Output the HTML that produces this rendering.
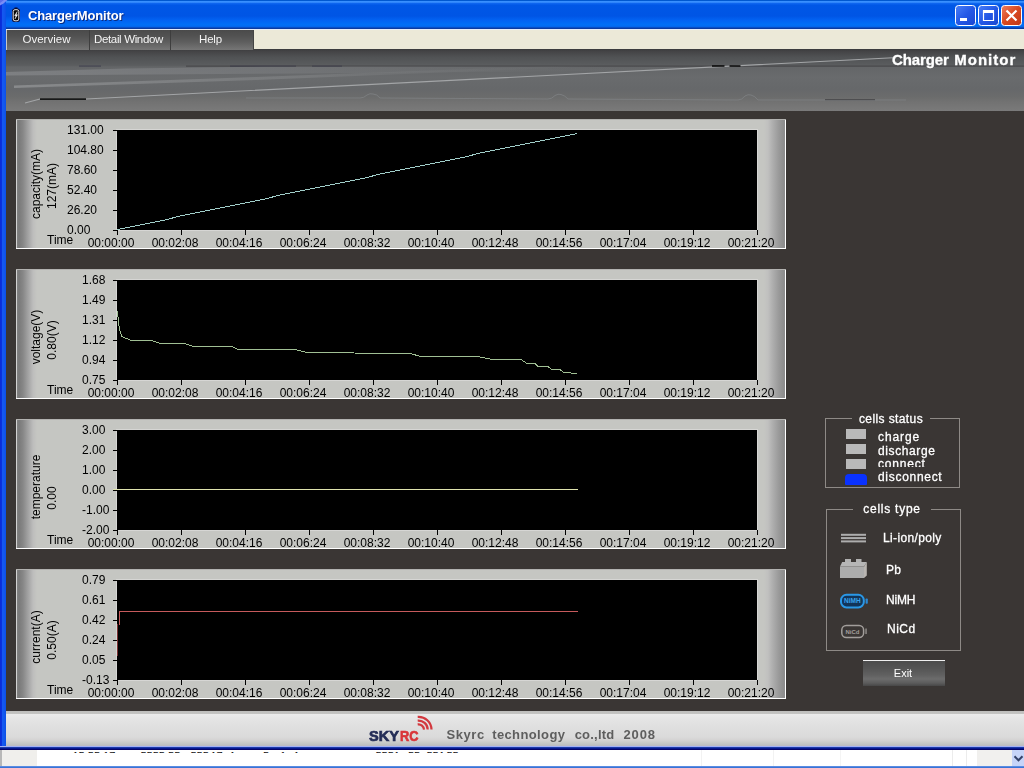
<!DOCTYPE html>
<html><head><meta charset="utf-8"><title>ChargerMonitor</title>
<style>
html,body{margin:0;padding:0;}
body{width:1024px;height:768px;overflow:hidden;position:relative;background:#3a3634;font-family:"Liberation Sans",sans-serif;font-size:12px;color:#000;}
.abs{position:absolute;}
#title{position:absolute;left:0;top:0;width:1024px;height:29px;background:linear-gradient(to bottom,#0058d0 0px,#0058d0 0.5px,#3a92ff 1.2px,#3288fb 2.4px,#0a62ee 3.6px,#0057e6 5.5px,#0055e5 16px,#0262f2 20px,#0070f6 25px,#0564ea 27px,#0a3aa0 28px,#0a3aa0 29px);}
#title .txt{position:absolute;left:28px;top:8px;font-weight:bold;font-size:13px;color:#fff;text-shadow:1px 1px 0 #0a2a80;letter-spacing:-0.15px;white-space:nowrap;}
#lborder{position:absolute;left:0;top:0;width:6px;height:748px;background:linear-gradient(to right,#0a2cd6 0,#0a32dc 1.5px,#1558f0 2.5px,#1258ee 4px,#0a50e8 6px);}
#menubar{position:absolute;left:6px;top:29px;width:1018px;height:20px;background:#ece9d8;border-top:1px solid #e6eefa;box-sizing:border-box;}
.mbtn{position:absolute;top:0;box-sizing:border-box;height:20px;z-index:2;background:linear-gradient(to bottom,#4a4a4a 0,#525252 6px,#5e5e5e 12px,#707070 18px,#767676 20px);color:#f4f4f4;font-size:11.5px;text-align:center;line-height:19px;white-space:nowrap;padding-right:3px;}
#banner{position:absolute;left:6px;top:49px;width:1018px;height:62px;background:linear-gradient(to bottom,#3a3a3c 0,#434345 2px,#505254 8px,#595b5d 15px,#5c5e60 16.500px,#646668 18px,#696b6d 28px,#66686a 40px,#6b6c6c 48px,#727272 53px,#7a7a7a 62px);}
#banner .bt{-webkit-text-stroke:0.300px #fff;position:absolute;left:886px;top:1.700px;color:#fff;font-weight:bold;font-size:15px;white-space:nowrap;line-height:17px;}
.panel{position:absolute;left:16px;width:770px;height:130px;background:#c5c6c2;box-sizing:border-box;}
.edgeL{position:absolute;left:0;top:0;width:22px;height:130px;background:linear-gradient(to right,#d2d2d2 0,#d2d2d2 1px,#808080 1.5px,#7a7a7a 3px,#878787 7px,#a2a2a2 12px,#bdbdbc 17px,#c5c6c2 21px);}
.edgeR{position:absolute;left:748px;top:0;width:22px;height:130px;background:linear-gradient(to right,#c5c6c2 0,#c0c0bf 4px,#adadad 9px,#999 15px,#8c8c8c 20px,#8c8c8c 21px,#fff 21px,#fff 22px);}
.bline{position:absolute;left:0;top:129px;width:770px;height:1px;background:#fff;}
.tline{position:absolute;left:0;top:0;width:770px;height:1px;background:#b2b2b0;}
.plot{position:absolute;left:101px;top:11px;width:640px;height:100px;background:#000;box-shadow:0 0 0 1px #d6d6d4;}
.ov{position:absolute;left:0;top:0;}
.yl{position:absolute;width:60px;text-align:left;white-space:nowrap;height:14px;line-height:14px;font-size:12px;}
.xl{position:absolute;top:117px;width:60px;text-align:center;height:14px;line-height:14px;font-size:12px;}
.time{position:absolute;left:31px;top:114px;height:14px;line-height:14px;}
.yl,.xl,.time,.lt,.leg,.mbtn,.txt,.bt,.rot,.gs{will-change:transform;}
.rot{position:absolute;width:100px;height:16px;line-height:16px;text-align:center;transform:rotate(-90deg);white-space:nowrap;}
fieldset{position:absolute;margin:0;padding:0;border:1px solid #8e8a86;box-sizing:border-box;}
.leg{position:absolute;background:#3a3634;-webkit-text-stroke:0.300px #fff;color:#fff;font-size:12px;text-align:center;height:14px;line-height:14px;white-space:nowrap;letter-spacing:0.5px;}
.lt{position:absolute;-webkit-text-stroke:0.300px #fff;color:#fff;font-size:12px;height:14px;line-height:14px;white-space:nowrap;letter-spacing:0.6px;}
.sq{position:absolute;left:846px;width:20px;height:10px;background:#b9b9b9;}
#footer{position:absolute;left:6px;top:711px;width:1018px;height:36px;background:linear-gradient(to bottom,#bebebc 0,#c4c4c2 2.500px,#ebebeb 3.200px,#e3e3e3 10px,#dddddd 20px,#dadada 26px,#d4d3d3 29px,#c6c9c6 32px,#babac0 35px,#b4b4bc 36px);}
.ct{position:absolute;top:-1.500px;line-height:13px;height:13px;}
</style></head>
<body>
<div id="title"><div class="txt">ChargerMonitor</div>
<svg class="abs" style="left:11px;top:7px" width="10" height="16" viewBox="0 0 10 16"><rect x="3.5" y="0.5" width="3" height="2" fill="#0a0a30"/><rect x="1" y="1.5" width="8" height="13.5" rx="2.5" fill="#0a0a30"/><rect x="2.2" y="2.700" width="5.600" height="11.100" rx="1.800" fill="#080808" stroke="#e6e6e6" stroke-width="1"/><path d="M6.200 4.600 L3.600 8.700 L5 8.700 L4 12 L6.600 7.700 L5.200 7.700 Z" fill="#fff" stroke="#fff" stroke-width="0.400"/></svg>
<svg class="abs" style="left:955px;top:5px" width="67" height="21" viewBox="0 0 67 21">
<defs><linearGradient id="gb" x1="0" y1="0" x2="1" y2="1"><stop offset="0" stop-color="#4a80f8"/><stop offset="0.5" stop-color="#2458e6"/><stop offset="1" stop-color="#1a46d0"/></linearGradient>
<linearGradient id="gr" x1="0" y1="0" x2="1" y2="1"><stop offset="0" stop-color="#f08060"/><stop offset="0.5" stop-color="#d84820"/><stop offset="1" stop-color="#c03818"/></linearGradient></defs>
<rect x="0.5" y="0.5" width="20" height="20" rx="3" fill="url(#gb)" stroke="#fff"/>
<rect x="5" y="13" width="7" height="3" fill="#fff"/>
<rect x="23.500" y="0.500" width="20" height="20" rx="3" fill="url(#gb)" stroke="#fff"/>
<path d="M28.500 6 h10 v9.500 h-10 z" fill="none" stroke="#fff" stroke-width="1.200"/><rect x="28" y="5" width="11" height="3" fill="#fff"/>
<rect x="46.500" y="0.500" width="20" height="20" rx="3" fill="url(#gr)" stroke="#fff"/>
<path d="M51.500 5.500 l10 10 M61.500 5.500 l-10 10" stroke="#fff" stroke-width="2.200"/>
</svg>
</div>
<div id="lborder"></div>
<svg class="abs" style="left:0;top:0" width="9" height="7" viewBox="0 0 9 7"><polygon points="0,0 7.500,0 3.500,3.500 0,5.500" fill="#7a8cf6"/><polygon points="0,0 4,0 0,3" fill="#5a6cea"/></svg>
<div id="menubar">
<div class="mbtn" style="left:0;width:83px;border-left:1px solid #c8c8c8">Overview</div>
<div class="mbtn" style="left:83px;width:81px;border-left:1px solid #3e3e3e;letter-spacing:-0.350px">Detail Window</div>
<div class="mbtn" style="left:164px;width:84px;border-left:1px solid #3e3e3e;border-right:1px solid #444;letter-spacing:-0.200px">Help</div>
</div>
<div id="banner">
<svg class="abs" style="left:0;top:0" width="1018" height="62" viewBox="0 0 1018 62">
<defs><linearGradient id="w1" x1="0" x2="1" y1="0" y2="0"><stop offset="0" stop-color="#85878a" stop-opacity="0.750"/><stop offset="0.400" stop-color="#7c7e81" stop-opacity="0.550"/><stop offset="1" stop-color="#6c6e70" stop-opacity="0"/></linearGradient>
<linearGradient id="w2" x1="0" x2="1" y1="0" y2="0"><stop offset="0" stop-color="#8c8e90" stop-opacity="0.900"/><stop offset="0.500" stop-color="#808284" stop-opacity="0.600"/><stop offset="1" stop-color="#707274" stop-opacity="0"/></linearGradient></defs>
<rect x="180" y="16.500" width="838" height="1.200" fill="#48484a"/>
<polygon points="0,23 120,19.500 260,17.600 700,17.600 700,21 300,24.500 0,26.500" fill="url(#w1)"/>
<polygon points="8,36.500 250,28 600,15 600,17 250,31 8,39" fill="url(#w2)"/>
<path d="M240 49 L354 49 q4 0 7 -3 q3 -2 6 -1 q4 0 7 4 L542 50 q4 0 7 -3.500 q3 -2 6 -1 q4 1 7 4.500 L732 51 q4 0 7 -4 q3 -2 6 -1 q4 1 7 5 L900 51" fill="none" stroke="#7e8082" stroke-width="1" opacity="0.850"/>
<polyline points="19,54 34,50 80,50 887,8.800" fill="none" stroke="#a3a5a7" stroke-width="1.100"/>
<rect x="34" y="49.300" width="46" height="1.600" fill="#0c0c0c"/>
<rect x="73" y="16.500" width="22" height="1.200" fill="#3a3a4a" opacity="0.700"/><rect x="224" y="16.500" width="66" height="1.200" fill="#3c3c48" opacity="0.800"/><rect x="306" y="16.500" width="30" height="1.200" fill="#3c3c48" opacity="0.800"/>
<rect x="706" y="16.200" width="12.500" height="1.600" fill="#0c0c0c"/><rect x="723.500" y="16.200" width="11" height="1.600" fill="#0c0c0c"/>
<rect x="819" y="50" width="50" height="1.200" fill="#4e4e50"/>
</svg>
<div class="bt"><span style="letter-spacing:-0.100px">Charger</span><span style="letter-spacing:1px;margin-left:0.300px"> Monitor</span></div>
</div>
<div class="panel" style="top:119px">
<div class="edgeL"></div><div class="edgeR"></div><div class="tline"></div><div class="bline"></div>
<div class="plot"></div>
<svg class="ov" width="770" height="130" viewBox="0 0 770 130"><rect x="97" y="11" width="5" height="1" fill="#000"/><rect x="97" y="31" width="5" height="1" fill="#000"/><rect x="97" y="51" width="5" height="1" fill="#000"/><rect x="97" y="71" width="5" height="1" fill="#000"/><rect x="97" y="91" width="5" height="1" fill="#000"/><rect x="97" y="111" width="5" height="1" fill="#000"/><rect x="101" y="111" width="1" height="5" fill="#000"/><rect x="165" y="111" width="1" height="5" fill="#000"/><rect x="229" y="111" width="1" height="5" fill="#000"/><rect x="293" y="111" width="1" height="5" fill="#000"/><rect x="357" y="111" width="1" height="5" fill="#000"/><rect x="421" y="111" width="1" height="5" fill="#000"/><rect x="485" y="111" width="1" height="5" fill="#000"/><rect x="549" y="111" width="1" height="5" fill="#000"/><rect x="613" y="111" width="1" height="5" fill="#000"/><rect x="677" y="111" width="1" height="5" fill="#000"/><rect x="741" y="111" width="1" height="5" fill="#000"/><polyline points="101.5,110.5 111.5,108.5 121.5,106.5 131.5,104.5 141.5,102.5 151.5,100.5 161.5,97.5 171.5,95.5 181.5,93.5 191.5,91.5 201.5,89.5 211.5,87.5 221.5,85.5 231.5,83.5 241.5,81.5 251.5,79.5 261.5,76.5 271.5,74.5 281.5,72.5 291.5,70.5 301.5,68.5 311.5,66.5 321.5,64.5 331.5,62.5 341.5,60.5 351.5,58.5 361.5,55.5 371.5,53.5 381.5,51.5 391.5,49.5 401.5,47.5 411.5,45.5 421.5,43.5 431.5,41.5 441.5,39.5 451.5,37.5 461.5,34.5 471.5,32.5 481.5,30.5 491.5,28.5 501.5,26.5 511.5,24.5 521.5,22.5 531.5,20.5 541.5,18.5 551.5,16.5 561.5,14.5" fill="none" stroke="#a2cfca" stroke-width="1" shape-rendering="crispEdges"/></svg>
<div class="yl" style="top:4px;left:51px">131.00</div>
<div class="yl" style="top:24px;left:51px">104.80</div>
<div class="yl" style="top:44px;left:51px">78.60</div>
<div class="yl" style="top:64px;left:51px">52.40</div>
<div class="yl" style="top:84px;left:51px">26.20</div>
<div class="yl" style="top:104px;left:51px">0.00</div>
<div class="xl" style="left:65px">00:00:00</div>
<div class="xl" style="left:129px">00:02:08</div>
<div class="xl" style="left:193px">00:04:16</div>
<div class="xl" style="left:257px">00:06:24</div>
<div class="xl" style="left:321px">00:08:32</div>
<div class="xl" style="left:385px">00:10:40</div>
<div class="xl" style="left:449px">00:12:48</div>
<div class="xl" style="left:513px">00:14:56</div>
<div class="xl" style="left:577px">00:17:04</div>
<div class="xl" style="left:641px">00:19:12</div>
<div class="xl" style="left:705px">00:21:20</div>
<div class="time">Time</div>
<div class="rot" style="left:-30px;top:57px">capacity(mA)</div>
<div class="rot" style="left:-14px;top:59px">127(mA)</div>
</div>
<div class="panel" style="top:269px">
<div class="edgeL"></div><div class="edgeR"></div><div class="tline"></div><div class="bline"></div>
<div class="plot"></div>
<svg class="ov" width="770" height="130" viewBox="0 0 770 130"><rect x="97" y="11" width="5" height="1" fill="#000"/><rect x="97" y="31" width="5" height="1" fill="#000"/><rect x="97" y="51" width="5" height="1" fill="#000"/><rect x="97" y="71" width="5" height="1" fill="#000"/><rect x="97" y="91" width="5" height="1" fill="#000"/><rect x="97" y="111" width="5" height="1" fill="#000"/><rect x="101" y="111" width="1" height="5" fill="#000"/><rect x="165" y="111" width="1" height="5" fill="#000"/><rect x="229" y="111" width="1" height="5" fill="#000"/><rect x="293" y="111" width="1" height="5" fill="#000"/><rect x="357" y="111" width="1" height="5" fill="#000"/><rect x="421" y="111" width="1" height="5" fill="#000"/><rect x="485" y="111" width="1" height="5" fill="#000"/><rect x="549" y="111" width="1" height="5" fill="#000"/><rect x="613" y="111" width="1" height="5" fill="#000"/><rect x="677" y="111" width="1" height="5" fill="#000"/><rect x="741" y="111" width="1" height="5" fill="#000"/><polyline points="101.5,42.0 102.5,53.0 103.5,61.0 106.0,67.5 115.0,71.5 136.0,71.5 144.0,74.5 169.0,74.5 177.0,77.5 216.0,77.5 222.0,80.5 279.0,80.5 291.0,83.5 384.0,84.5 394.0,84.5 405.0,87.5 462.0,87.5 476.0,90.5 505.0,90.5 511.0,94.5 519.0,94.5 522.0,97.5 532.0,97.5 536.0,100.5 544.0,100.5 548.0,103.5 561.0,104.5" fill="none" stroke="#a0bf94" stroke-width="1" shape-rendering="crispEdges"/></svg>
<div class="yl" style="top:4px;left:66px">1.68</div>
<div class="yl" style="top:24px;left:66px">1.49</div>
<div class="yl" style="top:44px;left:66px">1.31</div>
<div class="yl" style="top:64px;left:66px">1.12</div>
<div class="yl" style="top:84px;left:66px">0.94</div>
<div class="yl" style="top:104px;left:66px">0.75</div>
<div class="xl" style="left:65px">00:00:00</div>
<div class="xl" style="left:129px">00:02:08</div>
<div class="xl" style="left:193px">00:04:16</div>
<div class="xl" style="left:257px">00:06:24</div>
<div class="xl" style="left:321px">00:08:32</div>
<div class="xl" style="left:385px">00:10:40</div>
<div class="xl" style="left:449px">00:12:48</div>
<div class="xl" style="left:513px">00:14:56</div>
<div class="xl" style="left:577px">00:17:04</div>
<div class="xl" style="left:641px">00:19:12</div>
<div class="xl" style="left:705px">00:21:20</div>
<div class="time">Time</div>
<div class="rot" style="left:-30px;top:60px">voltage(V)</div>
<div class="rot" style="left:-14px;top:63px">0.80(V)</div>
</div>
<div class="panel" style="top:419px">
<div class="edgeL"></div><div class="edgeR"></div><div class="tline"></div><div class="bline"></div>
<div class="plot"></div>
<svg class="ov" width="770" height="130" viewBox="0 0 770 130"><rect x="97" y="11" width="5" height="1" fill="#000"/><rect x="97" y="31" width="5" height="1" fill="#000"/><rect x="97" y="51" width="5" height="1" fill="#000"/><rect x="97" y="71" width="5" height="1" fill="#000"/><rect x="97" y="91" width="5" height="1" fill="#000"/><rect x="97" y="111" width="5" height="1" fill="#000"/><rect x="101" y="111" width="1" height="5" fill="#000"/><rect x="165" y="111" width="1" height="5" fill="#000"/><rect x="229" y="111" width="1" height="5" fill="#000"/><rect x="293" y="111" width="1" height="5" fill="#000"/><rect x="357" y="111" width="1" height="5" fill="#000"/><rect x="421" y="111" width="1" height="5" fill="#000"/><rect x="485" y="111" width="1" height="5" fill="#000"/><rect x="549" y="111" width="1" height="5" fill="#000"/><rect x="613" y="111" width="1" height="5" fill="#000"/><rect x="677" y="111" width="1" height="5" fill="#000"/><rect x="741" y="111" width="1" height="5" fill="#000"/><polyline points="97.0,70.5 561.5,70.5" fill="none" stroke="#dfe3ae" stroke-width="1" shape-rendering="crispEdges"/></svg>
<div class="yl" style="top:4px;left:66px">3.00</div>
<div class="yl" style="top:24px;left:66px">2.00</div>
<div class="yl" style="top:44px;left:66px">1.00</div>
<div class="yl" style="top:64px;left:66px">0.00</div>
<div class="yl" style="top:84px;left:66px">-1.00</div>
<div class="yl" style="top:104px;left:66px">-2.00</div>
<div class="xl" style="left:65px">00:00:00</div>
<div class="xl" style="left:129px">00:02:08</div>
<div class="xl" style="left:193px">00:04:16</div>
<div class="xl" style="left:257px">00:06:24</div>
<div class="xl" style="left:321px">00:08:32</div>
<div class="xl" style="left:385px">00:10:40</div>
<div class="xl" style="left:449px">00:12:48</div>
<div class="xl" style="left:513px">00:14:56</div>
<div class="xl" style="left:577px">00:17:04</div>
<div class="xl" style="left:641px">00:19:12</div>
<div class="xl" style="left:705px">00:21:20</div>
<div class="time">Time</div>
<div class="rot" style="left:-30px;top:60px">temperature</div>
<div class="rot" style="left:-14px;top:71px">0.00</div>
</div>
<div class="panel" style="top:569px">
<div class="edgeL"></div><div class="edgeR"></div><div class="tline"></div><div class="bline"></div>
<div class="plot"></div>
<svg class="ov" width="770" height="130" viewBox="0 0 770 130"><rect x="97" y="11" width="5" height="1" fill="#000"/><rect x="97" y="31" width="5" height="1" fill="#000"/><rect x="97" y="51" width="5" height="1" fill="#000"/><rect x="97" y="71" width="5" height="1" fill="#000"/><rect x="97" y="91" width="5" height="1" fill="#000"/><rect x="97" y="111" width="5" height="1" fill="#000"/><rect x="101" y="111" width="1" height="5" fill="#000"/><rect x="165" y="111" width="1" height="5" fill="#000"/><rect x="229" y="111" width="1" height="5" fill="#000"/><rect x="293" y="111" width="1" height="5" fill="#000"/><rect x="357" y="111" width="1" height="5" fill="#000"/><rect x="421" y="111" width="1" height="5" fill="#000"/><rect x="485" y="111" width="1" height="5" fill="#000"/><rect x="549" y="111" width="1" height="5" fill="#000"/><rect x="613" y="111" width="1" height="5" fill="#000"/><rect x="677" y="111" width="1" height="5" fill="#000"/><rect x="741" y="111" width="1" height="5" fill="#000"/><polyline points="101.5,87.0 101.5,55.0" fill="none" stroke="#7a3030" stroke-width="1" shape-rendering="crispEdges"/><polyline points="103.5,56.0 103.5,42.5 561.5,42.5" fill="none" stroke="#c65a5c" stroke-width="1" shape-rendering="crispEdges"/></svg>
<div class="yl" style="top:4px;left:66px">0.79</div>
<div class="yl" style="top:24px;left:66px">0.61</div>
<div class="yl" style="top:44px;left:66px">0.42</div>
<div class="yl" style="top:64px;left:66px">0.24</div>
<div class="yl" style="top:84px;left:66px">0.05</div>
<div class="yl" style="top:104px;left:66px">-0.13</div>
<div class="xl" style="left:65px">00:00:00</div>
<div class="xl" style="left:129px">00:02:08</div>
<div class="xl" style="left:193px">00:04:16</div>
<div class="xl" style="left:257px">00:06:24</div>
<div class="xl" style="left:321px">00:08:32</div>
<div class="xl" style="left:385px">00:10:40</div>
<div class="xl" style="left:449px">00:12:48</div>
<div class="xl" style="left:513px">00:14:56</div>
<div class="xl" style="left:577px">00:17:04</div>
<div class="xl" style="left:641px">00:19:12</div>
<div class="xl" style="left:705px">00:21:20</div>
<div class="time">Time</div>
<div class="rot" style="left:-30px;top:60px">current(A)</div>
<div class="rot" style="left:-14px;top:63px">0.50(A)</div>
</div>
<fieldset style="left:825px;top:418px;width:135px;height:70px"></fieldset>
<div class="leg" style="left:852px;top:412px;width:78px;letter-spacing:0.4px">cells status</div>
<div class="sq" style="top:429px"></div><div class="sq" style="top:444px"></div><div class="sq" style="top:459px"></div>
<div class="sq" style="top:474px;left:845px;width:22px;height:11px;background:#0a32ff;border-radius:4px 4px 1px 1px"></div>
<div class="lt" style="left:878px;top:430px;letter-spacing:0.9px">charge</div>
<div class="lt" style="left:878px;top:443.500px">discharge</div>
<div class="lt" style="left:878px;top:457px;height:10px;overflow:hidden;letter-spacing:0.8px">connect</div>
<div class="lt" style="left:878px;top:470px;letter-spacing:0.7px">disconnect</div>
<fieldset style="left:826px;top:509px;width:135px;height:142px"></fieldset>
<div class="leg" style="left:853px;top:502px;width:78px;letter-spacing:0.75px">cells type</div>
<svg class="abs" style="left:836px;top:528px" width="36" height="115" viewBox="0 0 36 115">
<g fill="#adadad"><rect x="5" y="5.800" width="25" height="2"/><rect x="5" y="9.100" width="25" height="2"/><rect x="5" y="12.400" width="25" height="2"/></g>
<rect x="9" y="31" width="6" height="5" fill="#b2b2b2"/><rect x="20" y="31" width="5.500" height="5" fill="#b2b2b2"/>
<polygon points="4,38.500 6.200,34 30.800,34 28,38.500" fill="#b6b6b6"/>
<polygon points="28,38.500 30.800,34 30.800,47.400 28,50" fill="#b9b5b1"/>
<rect x="4" y="38.500" width="24" height="11.500" fill="#acacac"/>
<rect x="5" y="66.800" width="22.800" height="12.600" rx="5.500" fill="#123458" stroke="#2a98e6" stroke-width="2"/><rect x="29.600" y="70.500" width="2.200" height="5.200" rx="0.800" fill="#2a8ad6"/>
<text x="16.400" y="75.400" font-size="6.500" font-family="Liberation Sans, sans-serif" fill="#3aa4ee" text-anchor="middle" font-weight="bold">NiMH</text>
<rect x="5.800" y="97.400" width="21.800" height="12.200" rx="4.500" fill="none" stroke="#a29e9b" stroke-width="1.500"/><rect x="29.300" y="100.500" width="1.500" height="5.500" fill="#8e8a88"/>
<text x="16.500" y="105.700" font-size="6" font-family="Liberation Sans, sans-serif" fill="#a29e9b" text-anchor="middle" font-weight="bold">NiCd</text>
</svg>
<div class="lt" style="left:883px;top:531px;letter-spacing:0.350px">Li-ion/poly</div>
<div class="lt" style="left:886px;top:563px;letter-spacing:0.2px">Pb</div>
<div class="lt" style="left:886px;top:593px;letter-spacing:-0.200px">NiMH</div>
<div class="lt" style="left:887px;top:622px;letter-spacing:0.5px">NiCd</div>
<div class="abs gs" style="left:863px;top:660px;width:82px;height:26px;box-sizing:border-box;border-top:1px solid #f0f0f0;background:linear-gradient(to bottom,#4c4c4c 0,#555 30%,#606060 55%,#6c6c6c 72%,#5c5c5c 88%,#474747 100%);color:#fff;text-align:center;line-height:25px;font-size:11px;padding-right:2px">Exit</div>
<div id="footer">
<svg class="abs gs" style="left:360px;top:2px" width="80" height="32" viewBox="0 0 80 32">
<text x="3" y="27.500" font-family="Liberation Sans, sans-serif" font-weight="bold" font-size="15.200" fill="#232c56" stroke="#232c56" stroke-width="0.700" textLength="30" lengthAdjust="spacingAndGlyphs">SKY</text>
<text x="34" y="27.500" font-family="Liberation Sans, sans-serif" font-weight="bold" font-size="15.200" fill="#d9363a" stroke="#d9363a" stroke-width="0.700" textLength="18.500" lengthAdjust="spacingAndGlyphs">RC</text>
<g fill="none" stroke="#d2383e" stroke-width="2.200"><path d="M51.700 11.400 A5.500 5.500 0 0 1 58 16.600"/><path d="M51.700 7.600 A9.200 9.200 0 0 1 61.700 16.600"/><path d="M51.700 3.900 A13 13 0 0 1 65.500 16.600"/></g>
</svg>
<div class="abs gs" style="left:0;top:15.700px;width:700px;height:15px;font-weight:bold;font-size:13px;line-height:15px;color:#5e5e5e;white-space:nowrap"><span class="abs" style="left:440.500px;letter-spacing:0.550px">Skyrc</span> <span class="abs" style="left:486.200px;letter-spacing:0.380px">technology</span> <span class="abs" style="left:568.700px;letter-spacing:0.200px">co.,ltd</span> <span class="abs" style="left:617.500px;letter-spacing:0.850px">2008</span></div>
</div>
<div class="abs" style="left:0;top:746px;width:1024px;height:4px;background:linear-gradient(to bottom,#a2b0f6 0,#a2b0f6 1px,#1a3aa8 1px,#1a3aa8 2px,#061890 2px,#061890 3px,#020268 3px,#020268 4px)"></div>
<div class="abs" style="left:0;top:750px;width:1024px;height:16px;background:#fff"></div>
<div class="abs" style="left:0;top:750px;width:37px;height:16px;background:#f0efec;border-left:2px solid #b8b8b8;box-sizing:border-box"></div>
<div class="abs" id="clip" style="left:0;top:751px;width:1024px;height:2px;overflow:hidden;font-size:11px;color:#111;white-space:nowrap">
<span class="ct" style="left:72.500px">15:55:17</span>
<span class="ct" style="left:140.500px">5555.55</span>
<span class="ct" style="left:190.500px">555</span>
<span class="ct" style="left:210.500px">17</span>
<span class="ct" style="left:229.500px">1</span>
<span class="ct" style="left:263px">5</span>
<span class="ct" style="left:280px">1</span>
<span class="ct" style="left:293.500px">1</span>
<span class="ct" style="left:375.500px">5551</span>
<span class="ct" style="left:408px">55</span>
<span class="ct" style="left:426.500px">551</span>
<span class="ct" style="left:446.500px">55</span>
</div>
<div class="abs" style="left:701px;top:750px;width:1px;height:16px;background:#f2f2f2"></div><div class="abs" style="left:773px;top:750px;width:1px;height:16px;background:#f2f2f2"></div><div class="abs" style="left:840px;top:750px;width:1px;height:16px;background:#f4f4f4"></div><div class="abs" style="left:952px;top:750px;width:1px;height:16px;background:#ececec"></div><div class="abs" style="left:966px;top:750px;width:1px;height:16px;background:#ececec"></div><div class="abs" style="left:977px;top:750px;width:35px;height:16px;background:#f1f0ee"></div>
<div class="abs" style="left:1012px;top:750px;width:12px;height:16px;background:#c6d4f8"></div>
<svg class="abs" style="left:1012px;top:750px" width="12" height="15" viewBox="0 0 12 15"><path d="M2.500 6.300 L6.500 10.300 L10.500 6.300" fill="none" stroke="#33426a" stroke-width="2"/></svg>
<div class="abs" style="left:0;top:766px;width:1024px;height:2px;background:linear-gradient(to bottom,#6a98e8,#2a68d0)"></div>
</body></html>
